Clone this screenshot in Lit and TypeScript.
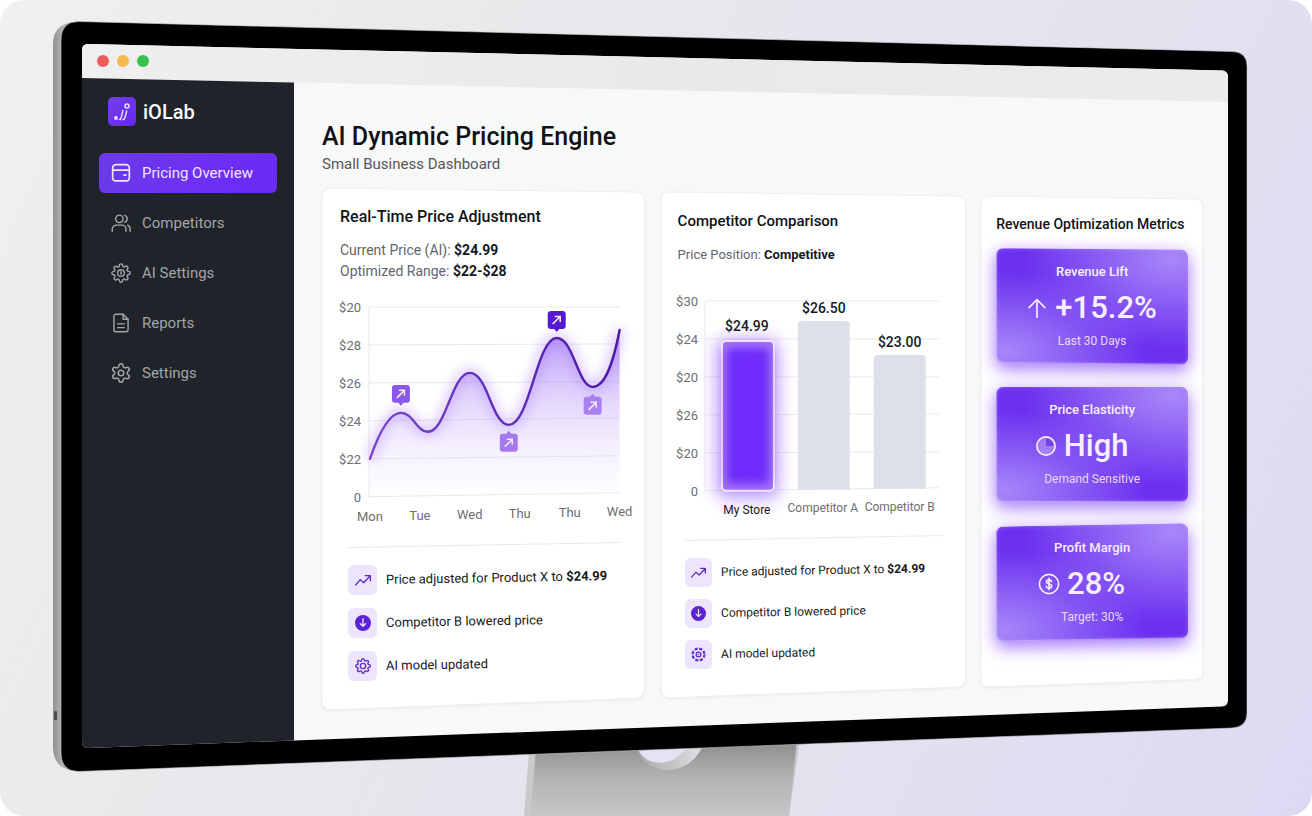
import { LitElement, html, svg, css } from "lit";
import { customElement, property } from "lit/decorators.js";

const GEAR =
  "M12.22 2h-.44a2 2 0 0 0-2 2v.18a2 2 0 0 1-1 1.73l-.43.25a2 2 0 0 1-2 0l-.15-.08a2 2 0 0 0-2.73.73l-.22.38a2 2 0 0 0 .73 2.73l.15.1a2 2 0 0 1 1 1.72v.51a2 2 0 0 1-1 1.74l-.15.09a2 2 0 0 0-.73 2.73l.22.38a2 2 0 0 0 2.73.73l.15-.08a2 2 0 0 1 2 0l.43.25a2 2 0 0 1 1 1.73V20a2 2 0 0 0 2 2h.44a2 2 0 0 0 2-2v-.18a2 2 0 0 1 1-1.73l.43-.25a2 2 0 0 1 2 0l.15.08a2 2 0 0 0 2.73-.73l.22-.39a2 2 0 0 0-.73-2.73l-.15-.08a2 2 0 0 1-1-1.74v-.5a2 2 0 0 1 1-1.74l.15-.09a2 2 0 0 0 .73-2.73l-.22-.38a2 2 0 0 0-2.73-.73l-.15.08a2 2 0 0 1-2 0l-.43-.25a2 2 0 0 1-1-1.73V4a2 2 0 0 0-2-2z";
const COG =
  "M19.4 15a1.65 1.65 0 0 0 .33 1.82l.06.06a2 2 0 0 1 0 2.83 2 2 0 0 1-2.83 0l-.06-.06a1.65 1.65 0 0 0-1.82-.33 1.65 1.65 0 0 0-1 1.51V21a2 2 0 0 1-2 2 2 2 0 0 1-2-2v-.09A1.65 1.65 0 0 0 9 19.4a1.65 1.65 0 0 0-1.82.33l-.06.06a2 2 0 0 1-2.83 0 2 2 0 0 1 0-2.83l.06-.06a1.65 1.65 0 0 0 .33-1.82 1.65 1.65 0 0 0-1.51-1H3a2 2 0 0 1-2-2 2 2 0 0 1 2-2h.09A1.65 1.65 0 0 0 4.6 9a1.65 1.65 0 0 0-.33-1.82l-.06-.06a2 2 0 0 1 0-2.83 2 2 0 0 1 2.83 0l.06.06a1.65 1.65 0 0 0 1.82.33H9a1.65 1.65 0 0 0 1-1.51V3a2 2 0 0 1 2-2 2 2 0 0 1 2 2v.09a1.65 1.65 0 0 0 1 1.51 1.65 1.65 0 0 0 1.82-.33l.06-.06a2 2 0 0 1 2.83 0 2 2 0 0 1 0 2.83l-.06.06a1.65 1.65 0 0 0-.33 1.82V9a1.65 1.65 0 0 0 1.51 1H21a2 2 0 0 1 2 2 2 2 0 0 1-2 2h-.09a1.65 1.65 0 0 0-1.51 1z";

const ICONS: Record<string, unknown> = {
  overview: svg`<path d="M2 8.500V6a4 4 0 0 1 4-4h12a4 4 0 0 1 4 4v12a3.500 3.500 0 0 1-3.500 3.500h-13A3.500 3.500 0 0 1 2 18z"/><path d="M2 8.500h20M15.500 14.500h2.500"/>`,
  people: svg`<circle cx="10" cy="7" r="4.500"/><path d="M1.500 22v-2.500a5 5 0 0 1 5-5h6.500a5 5 0 0 1 5 5V22M16.500 2.800a4.500 4.500 0 0 1 0 8.400M20 14.500a5 5 0 0 1 3 4.500v3"/>`,
  cog: svg`<path d=${COG}/><circle cx="12" cy="12" r="4"/><path d="M12 10.500v3"/>`,
  report: svg`<path d="M14.500 1.500H6A2.500 2.500 0 0 0 3.500 4v16A2.500 2.500 0 0 0 6 22.500h12a2.500 2.500 0 0 0 2.500-2.500V7.500z"/><path d="M14.500 1.500v6h6M8 13h8M8 17.500h8"/>`,
  gear: svg`<g transform="translate(-1.200 -1.200) scale(1.100)"><path d=${GEAR}/><circle cx="12" cy="12" r="3"/></g>`,
  trend: svg`<path d="M1 19.500l7-8 5 4.500L22.500 6M15.500 5.500H23V13"/>`,
  down: svg`<circle cx="12" cy="12" r="12" fill="currentColor" stroke="none"/><g stroke="#efe6ff"><path d="M12 5.500v11M8 13l4 4 4-4"/></g>`,
  model: svg`<path d=${COG}/><circle cx="12" cy="12" r="4"/>`,
  modelDashed: svg`<circle cx="12" cy="12" r="9.500" stroke-width="3.500" stroke-dasharray="5 2.460"/><circle cx="12" cy="12" r="3.800"/><path d="M12 11v2"/>`,
  up: svg`<path d="M12 23V2M2.500 11.500L12 2l9.500 9.500"/>`,
  pie: svg`<circle cx="12" cy="12" r="11" fill="#ffffff" fill-opacity=".25"/><path d="M12 12V3a9 9 0 0 1 9 9z" fill="#7440e2" stroke="none"/>`,
  dollar: svg`<circle cx="12" cy="12" r="11.500"/><path d="M15 9c-.4-1.300-1.500-2-3-2-1.800 0-3 .9-3 2.400 0 3.400 6.200 1.700 6.200 5.100 0 1.600-1.300 2.500-3.200 2.500-1.700 0-2.900-.8-3.200-2.200M12 5.300v13.400"/>`,
};

const icon = (name: string) => html`<svg class="icon ${name}" viewBox="0 0 24 24" aria-hidden="true">${ICONS[name]}</svg>`;

const iconStyles = css`
  .icon {
    width: 20px;
    height: 20px;
    flex: none;
    fill: none;
    stroke: currentColor;
    stroke-width: 2;
    stroke-linecap: round;
    stroke-linejoin: round;
    overflow: visible;
  }
  .modelDashed {
    stroke-linecap: butt;
  }
`;

@customElement("side-nav")
export class SideNav extends LitElement {
  static styles = [
    iconStyles,
    css`
      :host {
        display: block;
        padding: 19px 17px;
      }
      .brand {
        display: flex;
        align-items: center;
        gap: 7px;
        height: 29px;
        padding-left: 9px;
        font-size: 20px;
        font-weight: 500;
        color: #fbfbfd;
      }
      .mark {
        width: 28px;
        height: 29px;
      }
      .links {
        display: flex;
        flex-direction: column;
        gap: 10px;
        margin-top: 27px;
      }
      .link {
        display: flex;
        align-items: center;
        gap: 11px;
        height: 40px;
        padding-left: 12px;
        border-radius: 6px;
        color: #a3a5a9;
        font-size: 15px;
        text-decoration: none;
      }
      .link .icon {
        stroke-width: 1.700;
      }
      .active {
        color: #f1e6ff;
        background: linear-gradient(100deg, #6a3ae8, #6e30f3 55%, #692bf6);
      }
      .active .icon {
        stroke-width: 2;
      }
    `,
  ];

  links = [
    ["overview", "Pricing Overview"],
    ["people", "Competitors"],
    ["cog", "AI Settings"],
    ["report", "Reports"],
    ["gear", "Settings"],
  ];

  render() {
    return html`
      <div class="brand">
        <svg class="mark" viewBox="0 0 28 29" aria-hidden="true">
          <defs>
            <linearGradient id="mark" x1="0" y1="0" x2="1" y2="1">
              <stop offset="0" stop-color="#7440e6" />
              <stop offset="1" stop-color="#6526f5" />
            </linearGradient>
          </defs>
          <rect width="28" height="29" rx="5" fill="url(#mark)" />
          <g fill="none" stroke="#e9dcff" stroke-width="1.500" stroke-linecap="round">
            <circle cx="19" cy="9" r="2" />
            <circle cx="8" cy="21" r="1.200" fill="#e9dcff" />
            <path d="M11.500 22.500h.8c1.400-2.500 2-5.500 2.500-9M15 22.500h1c1.400-2.500 2-5.500 2.700-8.500" />
          </g>
        </svg>
        <span>iOLab</span>
      </div>
      <nav class="links">
        ${this.links.map(
          ([name, label], i) => html`<a class="link ${i === 0 ? "active" : ""}" href="#${name}">${icon(name)}<span>${label}</span></a>`
        )}
      </nav>
    `;
  }
}

@customElement("activity-list")
export class ActivityList extends LitElement {
  static styles = [
    iconStyles,
    css`
      :host {
        display: block;
      }
      .rule {
        display: block;
        width: 100%;
        height: 6px;
      }
      .list {
        display: flex;
        flex-direction: column;
        gap: 13px;
        margin: 17px 0 0;
        padding: 0;
        list-style: none;
      }
      .row {
        display: flex;
        align-items: center;
        gap: 9px;
        font-size: 13px;
        color: #17181c;
        white-space: nowrap;
      }
      .tile {
        display: grid;
        place-items: center;
        flex: none;
        width: 29px;
        height: 30px;
        border-radius: 6px;
        background: #ede4fd;
        color: #5f2cc4;
      }
      .tile .icon {
        width: 16px;
        height: 16px;
      }
      .tile .down {
        color: #5a21d8;
      }
      .text {
        transform: rotate(-1deg);
        transform-origin: left center;
      }
      b {
        font-weight: 700;
      }
      :host([compact]) .list {
        gap: 12px;
      }
      :host([compact]) .row {
        font-size: 12px;
      }
      :host([compact]) .tile {
        width: 27px;
        height: 29px;
      }
      :host([compact]) .icon {
        width: 15px;
        height: 15px;
      }
    `,
  ];

  @property() model = "model";

  render() {
    return html`
      <svg class="rule" viewBox="0 0 274 6" preserveAspectRatio="none" aria-hidden="true">
        <path d="M0 5.500L274 .5" stroke="#e8e9eb" />
      </svg>
      <ul class="list">
        <li class="row"><span class="tile">${icon("trend")}</span><span class="text">Price adjusted for Product X to <b>$24.99</b></span></li>
        <li class="row"><span class="tile">${icon("down")}</span><span class="text">Competitor B lowered price</span></li>
        <li class="row"><span class="tile">${icon(this.model)}</span><span class="text">AI model updated</span></li>
      </ul>
    `;
  }
}

const chartStyles = css`
  :host {
    display: block;
  }
  .chart {
    display: block;
    width: 100%;
    overflow: visible;
    font-size: 13px;
  }
  .grid {
    stroke: #e9e9ed;
    fill: none;
  }
  .tick {
    fill: #6c6e73;
    text-anchor: end;
  }
  .label {
    fill: #6c6e73;
    text-anchor: middle;
  }
`;

@customElement("price-chart")
export class PriceChart extends LitElement {
  static styles = [
    chartStyles,
    css`
      .halo {
        fill: none;
        stroke: #8c55f5;
        stroke-width: 9;
        opacity: 0.35;
        filter: blur(6px);
      }
      .line {
        fill: none;
        stroke-width: 2.400;
        stroke-linecap: round;
      }
    `,
  ];

  curve =
    "M30 164C39 138 49 118 61 118C73 118 77 137 88 137C106 137 112 78 130 78C148 78 152 130 169 130C190 130 197 43 217 43C234 43 238 92 253 92C266 92 274 66 280 35";

  marker(x: number, y: number, fill: string, below: boolean) {
    return svg`<g transform="translate(${x} ${y})">
      <rect x="-9" y="-9" width="18" height="18" rx="3" fill=${fill} />
      <path d=${below ? "M-3 -8.500L0 -12L3 -8.500z" : "M-3 8.500L0 12L3 8.500z"} fill=${fill} />
      <path d="M-4 4L3.500 -3.500M-2 -3.500H3.500V2" fill="none" stroke="#f4ecff" stroke-width="1.500" />
    </g>`;
  }

  render() {
    const ticks = ["$20", "$28", "$26", "$24", "$22", "0"];
    const right = [12, 49, 87, 123, 161, 198];
    const days = ["Mon", "Tue", "Wed", "Thu", "Thu", "Wed"];
    return html`
      <svg class="chart" viewBox="0 0 296 235" role="img" aria-label="Price by day">
        <defs>
          <linearGradient id="area" x1="0" y1="0" x2="0" y2="1">
            <stop offset="0" stop-color="#9a68f5" stop-opacity=".7" />
            <stop offset=".45" stop-color="#b695f8" stop-opacity=".36" />
            <stop offset="1" stop-color="#e6dafd" stop-opacity=".05" />
          </linearGradient>
          <linearGradient id="stroke" x1="0" y1="0" x2="1" y2="0">
            <stop offset="0" stop-color="#7a45c9" />
            <stop offset="1" stop-color="#4a17a8" />
          </linearGradient>
        </defs>
        ${right.map((y, i) => svg`<path class="grid" d="M29 ${12 + i * 38}L280 ${y}" />`)}
        <path class="grid" d="M29 12V202" />
        <path class="halo" d=${this.curve} />
        <path d="${this.curve}V198L30 202z" fill="url(#area)" />
        <path class="line" d=${this.curve} stroke="url(#stroke)" />
        ${this.marker(61, 99, "#8a58e6", false)} ${this.marker(217, 25, "#5519d2", false)}
        ${this.marker(169, 148, "#a679ef", true)} ${this.marker(253, 111, "#a981ee", true)}
        ${ticks.map((t, i) => svg`<text class="tick" x="21" y=${17 + i * 38}>${t}</text>`)}
        ${days.map((d, i) => svg`<text class="label" x=${30 + i * 50} y=${226 - i}>${d}</text>`)}
      </svg>
    `;
  }
}

@customElement("competitor-chart")
export class CompetitorChart extends LitElement {
  static styles = [
    chartStyles,
    css`
      .value {
        fill: #17181c;
        text-anchor: middle;
        font-size: 14px;
        font-weight: 500;
      }
      .label {
        font-size: 12px;
      }
      .own {
        fill: #17181c;
      }
      .bar {
        fill: #dde0e8;
      }
      .glow {
        fill: #7a35ff;
        opacity: 0.6;
        filter: blur(9px);
      }
      .frame {
        fill: #a173fb;
        stroke: #f9e9ff;
        stroke-width: 2;
      }
      .core {
        fill: #6e2bfa;
        filter: blur(4px);
      }
    `,
  ];

  render() {
    const ticks = ["$30", "$24", "$20", "$26", "$20", "0"];
    const right = [13, 51, 89, 126, 164, 200];
    return html`
      <svg class="chart" viewBox="0 0 276 235" role="img" aria-label="Price by store">
        ${right.map((y, i) => svg`<path class="grid" d="M27 ${13 + i * 38}L261 ${y}" />`)}
        <path class="grid" d="M27 13V203" />
        <rect class="glow" x="40" y="53" width="59" height="156" />
        <rect class="frame" x="44" y="53" width="52" height="150" rx="4" />
        <rect class="core" x="49" y="60" width="42" height="136" rx="4" />
        <path class="bar" d="M120 202V37a4 4 0 0 1 4-4h44a4 4 0 0 1 4 4v165z" />
        <path class="bar" d="M196 201V71a4 4 0 0 1 4-4h44a4 4 0 0 1 4 4v130z" />
        <text class="value" x="69" y="43">$24.99</text>
        <text class="value" x="146" y="25">$26.50</text>
        <text class="value" x="222" y="59">$23.00</text>
        ${ticks.map((t, i) => svg`<text class="tick" x="20" y=${18 + i * 38}>${t}</text>`)}
        <text class="label own" x="69" y="226">My Store</text>
        <text class="label" x="145" y="224">Competitor A</text>
        <text class="label" x="222" y="223">Competitor B</text>
      </svg>
    `;
  }
}

@customElement("metric-panel")
export class MetricPanel extends LitElement {
  static styles = [
    iconStyles,
    css`
      :host {
        display: grid;
        color: #f8eeff;
        text-align: center;
      }
      .art,
      .body {
        grid-area: 1 / 1;
      }
      .art {
        border-radius: 7px;
        background: radial-gradient(ellipse at 92% 8%, #a887f8 0%, #a282f700 60%),
          radial-gradient(ellipse at 4% 90%, #a687f9 0%, #a282f700 55%), #6b30ef;
        box-shadow: 0 7px 16px #7a3cf580, 0 2px 16px #a578fa66, inset 0 0 5px #d0b6ff59,
          inset 1px -1px 1px #e9d7ff8c;
      }
      .tilt-down {
        transform: skewY(0.5deg);
      }
      .tilt-up {
        transform: skewY(-1deg);
      }
      .body {
        position: relative;
        display: flex;
        flex-direction: column;
        padding: 13px 0;
      }
      .name {
        font-size: 13px;
        font-weight: 500;
        line-height: 20px;
      }
      .value {
        display: flex;
        align-items: center;
        justify-content: center;
        gap: 8px;
        margin: 6px 0 3px;
        font-size: 31px;
        font-weight: 500;
        line-height: 40px;
      }
      .value .icon {
        width: 20px;
        height: 22px;
      }
      .lead {
        padding-right: 20px;
      }
      .note {
        font-size: 12px;
        line-height: 20px;
        color: #e6d8fe;
      }
    `,
  ];

  @property() name = "";
  @property() value = "";
  @property() note = "";
  @property() glyph = "";
  @property() tilt = "";

  render() {
    return html`
      <div class="art ${this.tilt}"></div>
      <div class="body">
        <div class="name">${this.name}</div>
        <div class="value ${this.glyph === "up" ? "" : "lead"}">${icon(this.glyph)}<span>${this.value}</span></div>
        <div class="note">${this.note}</div>
      </div>
    `;
  }
}

@customElement("app-root")
export class AppRoot extends LitElement {
  static styles = css`
    :host {
      display: block;
      font-family: Roboto, "Liberation Sans", sans-serif;
      color: #101216;
      background: #ffffff;
    }
    * {
      box-sizing: border-box;
    }
    .scene {
      display: grid;
      min-height: 100vh;
      border-radius: 24px;
      overflow: hidden;
      background: linear-gradient(115deg, #f0f0ef 0%, #e8e8ec 35%, #e4e1ef 70%, #dfd8f3 100%);
    }
    .monitor,
    .screen {
      grid-area: 1 / 1;
    }
    .monitor {
      width: 100%;
      height: 0;
      min-height: 100%;
    }
    .screen {
      position: relative;
      display: grid;
      grid-template-rows: 34px 1fr;
      padding: 44px 84px 69px 82px;
    }
    .bar {
      display: flex;
      align-items: center;
      gap: 8px;
      padding-left: 15px;
    }
    .dot {
      width: 12px;
      height: 12px;
      padding: 0;
      border: 0;
      border-radius: 50%;
    }
    .red {
      background: #ee5c5a;
    }
    .amber {
      background: #f5b94d;
    }
    .green {
      background: #36c24e;
    }
    .columns {
      display: grid;
      grid-template-columns: 212px 1fr;
    }
    .main {
      padding: 41px 25px 0 28px;
    }
    .title {
      margin: 0;
      font-size: 25px;
      font-weight: 500;
      line-height: 36px;
    }
    .subtitle {
      margin: 0 0 15px;
      font-size: 15px;
      line-height: 18px;
      color: #55575c;
    }
    .cards {
      display: grid;
      grid-template-columns: 323fr 305fr 222fr;
      gap: 16px;
      align-items: start;
    }
    .card {
      display: grid;
      grid-template-columns: minmax(0, 1fr);
    }
    .sheet,
    .content {
      grid-area: 1 / 1;
    }
    .sheet {
      width: 100%;
      height: 0;
      min-height: 100%;
      overflow: visible;
      fill: #ffffff;
      stroke: #eeeff1;
      filter: drop-shadow(0 1px 1px #2b2f4512);
    }
    .content {
      position: relative;
      padding: 17px 9px 29px 18px;
    }
    .second {
      margin-top: 4px;
    }
    .second .content {
      padding: 17px 12px 29px 17px;
    }
    .third {
      margin-top: 8px;
    }
    .third .content {
      padding: 16px 15px 47px;
    }
    .heading {
      margin: 0 0 11px;
      font-size: 16px;
      font-weight: 500;
      line-height: 24px;
      white-space: nowrap;
    }
    .second .heading {
      font-size: 15px;
    }
    .third .heading {
      margin-bottom: 13px;
      font-size: 14px;
    }
    .facts {
      margin: 0;
      font-size: 14px;
      line-height: 21px;
      color: #63656a;
    }
    .second .facts {
      font-size: 13px;
    }
    .facts b {
      font-weight: 700;
      color: #17181c;
    }
    .wave {
      margin-top: 13px;
    }
    .bars {
      margin-top: 23px;
    }
    .first .activity {
      margin: 12px 14px 0 8px;
    }
    .second .activity {
      margin: 12px 10px 0 7px;
    }
    .metrics {
      display: flex;
      flex-direction: column;
      gap: 23px;
    }
  `;

  render() {
    return html`
      <div class="scene">
        <svg class="monitor" viewBox="0 0 1312 816" preserveAspectRatio="none" aria-hidden="true">
          <defs>
            <linearGradient id="stand" x1="0" y1="0" x2="0" y2="1">
              <stop offset="0" stop-color="#8b8b8c" />
              <stop offset=".5" stop-color="#b3b3b4" />
              <stop offset="1" stop-color="#c6c7c8" />
            </linearGradient>
            <linearGradient id="side" x1="0" y1="0" x2="1" y2="0">
              <stop offset="0" stop-color="#8f9292" />
              <stop offset=".5" stop-color="#b9bbbb" />
              <stop offset="1" stop-color="#8c8e8e" />
            </linearGradient>
            <linearGradient id="chrome" x1="0" y1="0" x2="1" y2="0">
              <stop offset="0" stop-color="#f0eff0" />
              <stop offset=".5" stop-color="#e9e9ea" />
              <stop offset="1" stop-color="#eaebec" />
            </linearGradient>
            <linearGradient id="notch" x1="0" y1="0" x2="1" y2="0">
              <stop offset="0" stop-color="#a9a9ab" />
              <stop offset=".5" stop-color="#c2c2c5" />
              <stop offset="1" stop-color="#e4e4e8" />
            </linearGradient>
            <clipPath id="glass">
              <path d="M88 44L1222 70.500Q1228 71 1228 77V700Q1228 706 1222 706.500L88 748Q82 748 82 742V50Q82 44 88 44z" />
            </clipPath>
          </defs>
          <path d="M530 740H800L789 816H524z" fill="#c9c9cc" />
          <path d="M537 740H797L789 816H530z" fill="url(#stand)" />
          <path d="M636 744C640 778 692 780 704 742z" fill="url(#notch)" />
          <path d="M637 746C643 769 678 769 689 742z" fill="#e6e2f4" />
          <path d="M76 22Q53 23 53 44V748Q54 770 76 771z" fill="url(#side)" />
          <rect x="54" y="711" width="3" height="9" rx="1" fill="#4a4b4d" />
          <path d="M78 21.500L1232 51.500Q1247 52 1247 66V713Q1247 727 1232 728L78 771.500Q61 771 61 753V40Q61 22 78 21.500z" fill="#000000" stroke="#c9c9cf" stroke-width=".6" />
          <g clip-path="url(#glass)">
            <rect x="82" y="40" width="1150" height="710" fill="#f7f9f9" />
            <path d="M82 40H1228V102L82 78z" fill="url(#chrome)" />
            <path d="M82 78L294 82.500V750H82z" fill="#202329" />
          </g>
        </svg>
        <div class="screen">
          <div class="bar">
            <button class="dot red" aria-label="Close"></button>
            <button class="dot amber" aria-label="Minimize"></button>
            <button class="dot green" aria-label="Maximize"></button>
          </div>
          <div class="columns">
            <side-nav></side-nav>
            <main class="main">
              <h1 class="title">AI Dynamic Pricing Engine</h1>
              <p class="subtitle">Small Business Dashboard</p>
              <div class="cards">
                <section class="card first">
                  <svg class="sheet" viewBox="0 0 323 521" preserveAspectRatio="none" aria-hidden="true">
                    <path d="M9 0L314 4Q323 4 323 13V500Q323 509 314 509.500L9 521Q0 521 0 512V9Q0 0 9 0z" />
                  </svg>
                  <div class="content">
                    <h2 class="heading">Real-Time Price Adjustment</h2>
                    <p class="facts">Current Price (AI): <b>$24.99</b></p>
                    <p class="facts">Optimized Range: <b>$22-$28</b></p>
                    <price-chart class="wave"></price-chart>
                    <activity-list class="activity"></activity-list>
                  </div>
                </section>
                <section class="card second">
                  <svg class="sheet" viewBox="0 0 305 505" preserveAspectRatio="none" aria-hidden="true">
                    <path d="M9 0L296 4Q305 4 305 13V486Q305 494 296 494.500L9 505Q0 505 0 496V9Q0 0 9 0z" />
                  </svg>
                  <div class="content">
                    <h2 class="heading">Competitor Comparison</h2>
                    <p class="facts">Price Position: <b>Competitive</b></p>
                    <competitor-chart class="bars"></competitor-chart>
                    <activity-list class="activity" compact model="modelDashed"></activity-list>
                  </div>
                </section>
                <section class="card third">
                  <svg class="sheet" viewBox="0 0 222 491" preserveAspectRatio="none" aria-hidden="true">
                    <path d="M9 0L213 3Q222 3 222 12V475Q222 483 213 483.500L9 491Q0 491 0 482V9Q0 0 9 0z" />
                  </svg>
                  <div class="content">
                    <h2 class="heading">Revenue Optimization Metrics</h2>
                    <div class="metrics">
                      <metric-panel name="Revenue Lift" value="+15.2%" note="Last 30 Days" glyph="up" tilt="tilt-down"></metric-panel>
                      <metric-panel name="Price Elasticity" value="High" note="Demand Sensitive" glyph="pie"></metric-panel>
                      <metric-panel name="Profit Margin" value="28%" note="Target: 30%" glyph="dollar" tilt="tilt-up"></metric-panel>
                    </div>
                  </div>
                </section>
              </div>
            </main>
          </div>
        </div>
      </div>
    `;
  }
}
